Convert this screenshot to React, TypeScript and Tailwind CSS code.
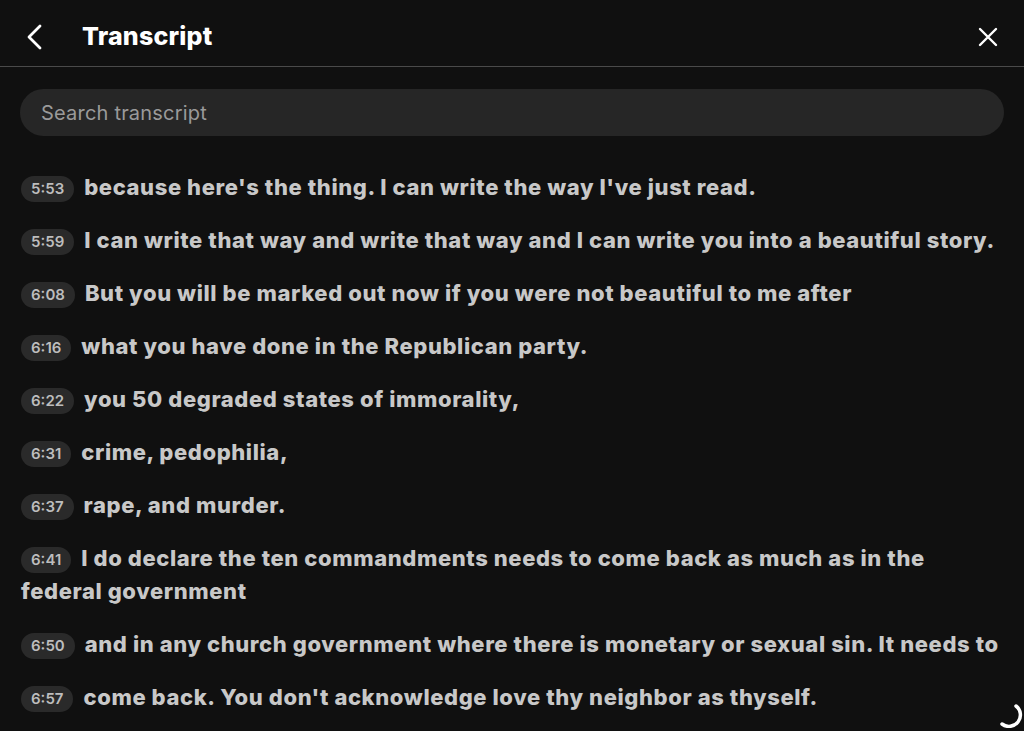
const lines: Array<[string, string]> = [
  ['5:53', "because here's the thing. I can write the way I've just read."],
  ['5:59', 'I can write that way and write that way and I can write you into a beautiful story.'],
  ['6:08', 'But you will be marked out now if you were not beautiful to me after'],
  ['6:16', 'what you have done in the Republican party.'],
  ['6:22', 'you 50 degraded states of immorality,'],
  ['6:31', 'crime, pedophilia,'],
  ['6:37', 'rape, and murder.'],
  ['6:41', 'I do declare the ten commandments needs to come back as much as in the federal government'],
  ['6:50', 'and in any church government where there is monetary or sexual sin. It needs to'],
  ['6:57', "come back. You don't acknowledge love thy neighbor as thyself."],
]

export default function App() {
  return (
    <div className="relative h-[731px] w-[1024px] overflow-hidden bg-[#101010] font-['Inter',sans-serif] text-white">
      <header className="flex h-[67px] items-center border-b border-[#4a4a4a] pl-[26px] pr-[26px] pt-[8px]">
        <svg width="18" height="26" viewBox="0 0 18 26" className="shrink-0">
          <path d="M14 2 L3 13 L14 24" fill="none" stroke="white" strokeWidth="2.8" strokeLinecap="round" strokeLinejoin="round" />
        </svg>
        <h1 className="ml-[38px] text-[25px] font-extrabold tracking-[0.2px]">Transcript</h1>
        <svg width="20" height="20" viewBox="0 0 20 20" className="ml-auto shrink-0">
          <path d="M2 2 L18 18 M18 2 L2 18" fill="none" stroke="white" strokeWidth="2.4" strokeLinecap="round" />
        </svg>
      </header>

      <div className="px-[20px] pt-[22px]">
        <div className="flex h-[47px] items-center rounded-full bg-[#262626] px-[21px] text-[20px] tracking-[0.2px] text-[#9a9a9a]">
          Search transcript
        </div>
      </div>

      <div className="space-y-[20px] pl-[21px] pr-[20px] pt-[35px]">
        {lines.map(([t, text]) => (
          <p key={t} className="text-[22px] font-extrabold leading-[33px] tracking-[0.6px] text-[#c8c8c8]">
            <span className="mr-[10px] inline-block rounded-full bg-[#2a2a2a] px-[10px] align-middle text-[15px] font-semibold leading-[26px] tracking-normal text-[#bdbdbd]">
              {t}
            </span>
            {text}
          </p>
        ))}
      </div>

      <svg className="absolute left-[992px] top-[696px]" width="32" height="32" viewBox="0 0 32 32">
        <path d="M24 10 A 11 11 0 0 1 10 28" fill="none" stroke="white" strokeWidth="3.5" strokeLinecap="round" />
      </svg>
    </div>
  )
}
